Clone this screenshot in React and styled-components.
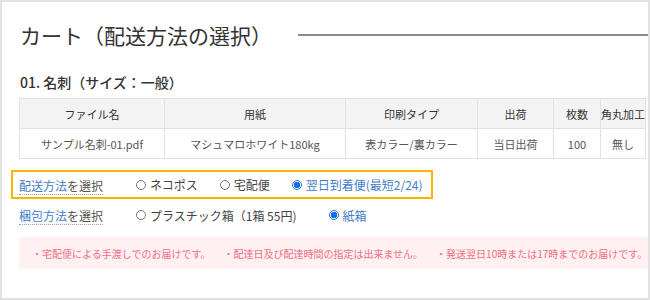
import styled, { createGlobalStyle } from 'styled-components';

const GlobalStyle = createGlobalStyle`
  body {
    margin: 0;
    font-family: "Noto Sans CJK JP", "Noto Sans", sans-serif;
    color: #333;
  }
`;

const columns = [
  { label: 'ファイル名', width: 145, value: 'サンプル名刺-01.pdf' },
  { label: '用紙', width: 181, value: 'マシュマロホワイト180kg' },
  { label: '印刷タイプ', width: 132, value: '表カラー/裏カラー' },
  { label: '出荷', width: 76, value: '当日出荷' },
  { label: '枚数', width: 47, value: '100' },
  { label: '角丸加工', width: 45, value: '無し' },
];

const notices = [
  '・宅配便による手渡しでのお届けです。',
  '・配達日及び配達時間の指定は出来ません。',
  '・発送翌日10時または17時までのお届けです。',
];

function Radio({ label, checked }) {
  return (
    <Option $checked={checked}>
      <Dot $checked={checked} />
      {label}
    </Option>
  );
}

export default function App() {
  return (
    <>
      <GlobalStyle />
      <Page>
        <Title>
          カート（配送方法の選択）
          <Rule />
        </Title>
        <Heading>01. 名刺（サイズ：一般）</Heading>
        <Table>
          <colgroup>
            {columns.map((c) => (
              <col key={c.label} style={{ width: c.width }} />
            ))}
          </colgroup>
          <thead>
            <tr>
              {columns.map((c) => (
                <Th key={c.label}>{c.label}</Th>
              ))}
            </tr>
          </thead>
          <tbody>
            <tr>
              {columns.map((c) => (
                <Td key={c.label}>{c.value}</Td>
              ))}
            </tr>
          </tbody>
        </Table>

        <Row $highlight>
          <Label>
            <LabelText>
              <Accent>配送方法</Accent>を選択
            </LabelText>
          </Label>
          <Options $gap={22}>
            <Radio label="ネコポス" />
            <Radio label="宅配便" />
            <Radio label="翌日到着便(最短2/24)" checked />
          </Options>
        </Row>

        <Row>
          <Label>
            <LabelText>
              <Accent>梱包方法</Accent>を選択
            </LabelText>
          </Label>
          <Options $gap={32}>
            <Radio label="プラスチック箱（1箱 55円)" />
            <Radio label="紙箱" checked />
          </Options>
        </Row>

        <Notice>
          {notices.map((n) => (
            <span key={n}>{n}</span>
          ))}
        </Notice>
      </Page>
    </>
  );
}

const Page = styled.div`
  width: 650px;
  height: 300px;
  box-sizing: border-box;
  border: 2px solid #e2e2e2;
  padding: 18px 0 0 17px;
  overflow: hidden;
`;

const Title = styled.h1`
  display: flex;
  align-items: center;
  margin: 0 0 0 1px;
  height: 30px;
  font-size: 21px;
  font-weight: normal;
  color: #333;
  white-space: nowrap;
`;

const Rule = styled.span`
  flex: 1;
  height: 2px;
  margin-left: 26px;
  background: #8a8a8a;
`;

const Heading = styled.h2`
  margin: 22px 0 6px 1px;
  height: 20px;
  line-height: 20px;
  font-size: 14px;
  font-weight: 500;
  color: #333;
`;

const Table = styled.table`
  width: 626px;
  table-layout: fixed;
  border-collapse: collapse;
  font-size: 11px;
`;

const Th = styled.th`
  height: 29px;
  padding: 0;
  border: 1px solid #e2e2e2;
  background: #f3f3f3;
  font-weight: normal;
  color: #333;
  white-space: nowrap;
`;

const Td = styled.td`
  height: 29px;
  padding: 0;
  border: 1px solid #e2e2e2;
  text-align: center;
  color: #555;
  white-space: nowrap;
`;

const Row = styled.div`
  display: flex;
  align-items: center;
  box-sizing: border-box;
  width: 422px;
  height: ${(p) => (p.$highlight ? '29px' : '28px')};
  margin: ${(p) => (p.$highlight ? '11px' : '2px')} 0 0 -8px;
  padding: 0 6px;
  border: 2px solid ${(p) => (p.$highlight ? '#f7b500' : 'transparent')};
  font-size: 12px;
  white-space: nowrap;
`;

const Label = styled.div`
  width: 117px;
  flex-shrink: 0;
`;

const LabelText = styled.span`
  display: inline-block;
  line-height: 16px;
  padding-top: 3px;
  border-bottom: 1px dotted #9a9a9a;
  color: #555;
`;

const Accent = styled.span`
  color: #3f7cc8;
`;

const Options = styled.div`
  display: flex;
  align-items: center;
  gap: ${(p) => p.$gap}px;
`;

const Option = styled.label`
  display: flex;
  align-items: center;
  gap: 4px;
  color: ${(p) => (p.$checked ? '#3f7cc8' : '#444')};
`;

const Dot = styled.span`
  width: 10px;
  height: 10px;
  box-sizing: border-box;
  border-radius: 50%;
  border: 1px solid ${(p) => (p.$checked ? '#1a6fe0' : '#777')};
  background: ${(p) =>
    p.$checked
      ? 'radial-gradient(circle, #1a6fe0 0 3px, #fff 3.5px)'
      : '#fff'};
`;

const Notice = styled.div`
  display: flex;
  align-items: center;
  gap: 13px;
  height: 32px;
  margin-top: 8px;
  padding-left: 13px;
  background: #fff0f2;
  color: #ee6f83;
  font-size: 10px;
  white-space: nowrap;
`;
